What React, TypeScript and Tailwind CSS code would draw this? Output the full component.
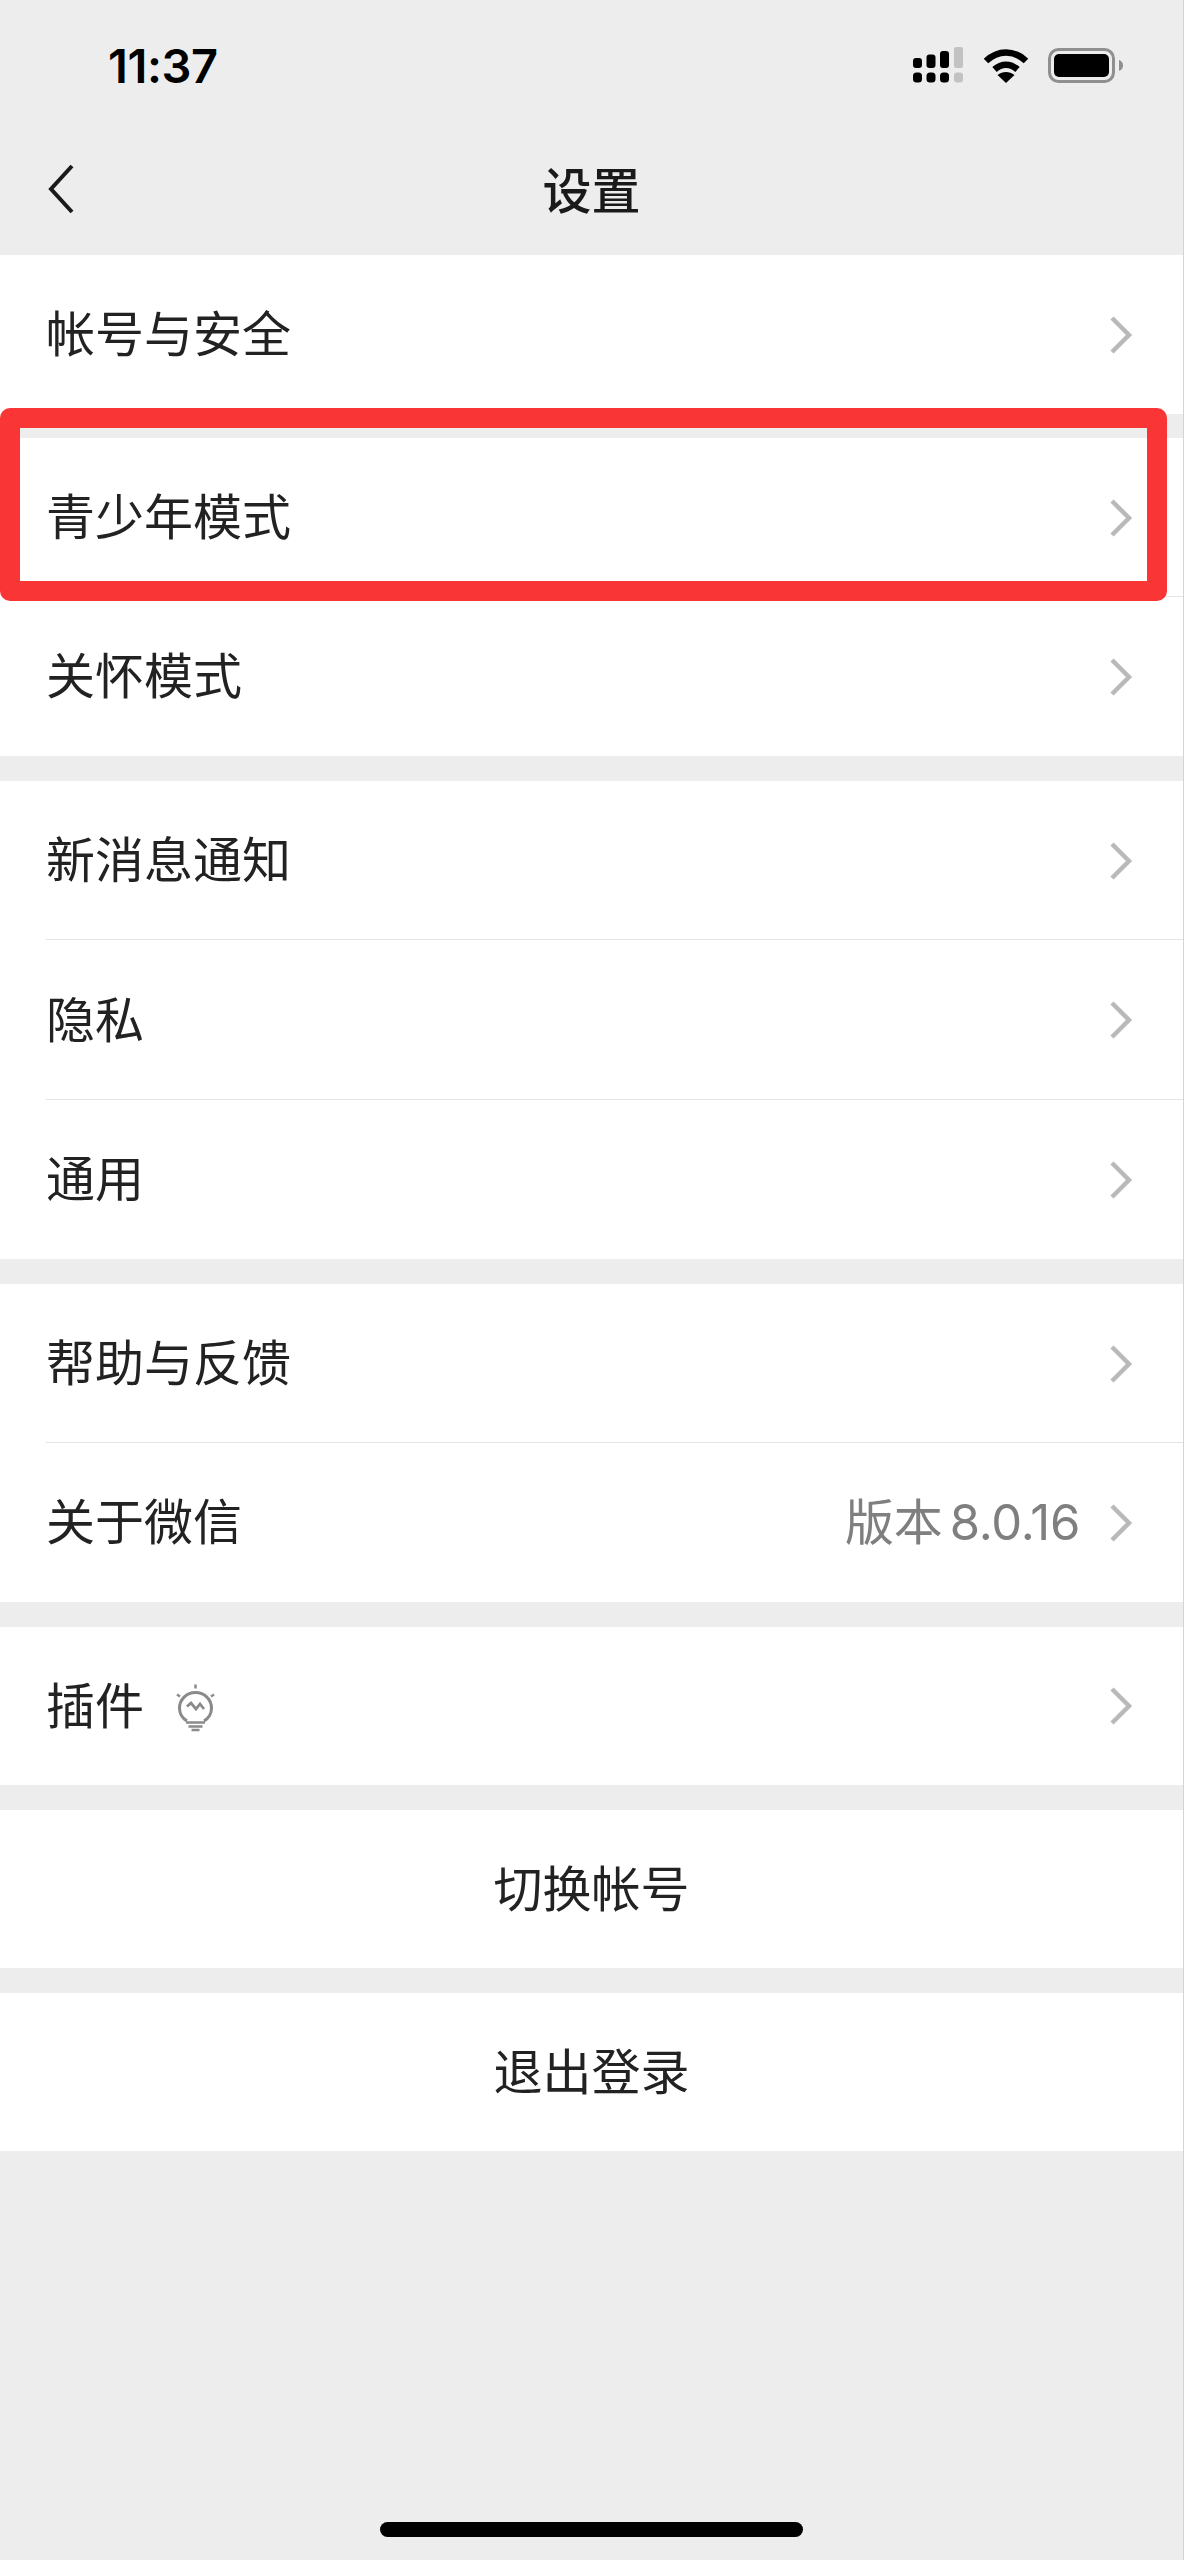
import React from 'react';

const CJK = "font-['Inter','Noto_Sans_CJK_SC',sans-serif]";

const Chevron = () => (
  <svg width="24" height="40" viewBox="0 0 24 40" fill="none" className="shrink-0">
    <path d="M3 3L20 20L3 37" stroke="#b9b9b9" strokeWidth="4.5" strokeLinecap="butt" strokeLinejoin="miter" />
  </svg>
);

const SignalIcon = () => (
  <svg width="50" height="36" viewBox="0 0 50 36">
    <rect x="0" y="11" width="9" height="10" rx="3" fill="#000" />
    <rect x="13.5" y="7.5" width="9" height="13.5" rx="3" fill="#000" />
    <rect x="27" y="4" width="9" height="17" rx="3" fill="#000" />
    <rect x="41" y="0" width="9" height="21" rx="2" fill="#c2c2c2" />
    <rect x="0" y="25.5" width="9" height="10" rx="3.5" fill="#000" />
    <rect x="13.5" y="25.5" width="9" height="10" rx="3.5" fill="#000" />
    <rect x="27" y="25.5" width="9" height="10" rx="3.5" fill="#000" />
    <rect x="41" y="25.5" width="9" height="10" rx="3" fill="#c2c2c2" />
  </svg>
);

const WifiIcon = () => (
  <svg width="46" height="35" viewBox="0 0 46 35" fill="none">
    <path d="M3 13C15 1.500 31 1.500 43 13" stroke="#000" strokeWidth="6.500" />
    <path d="M11.500 21.500C18.500 15 27.500 15 34.500 21.500" stroke="#000" strokeWidth="6.500" />
    <path d="M14.500 27C19.500 23 26.500 23 31.500 27L23 35Z" fill="#000" />
  </svg>
);

const BatteryIcon = () => (
  <svg width="75" height="35" viewBox="0 0 75 35" fill="none">
    <rect x="1.500" y="1.500" width="64" height="32" rx="9" stroke="#8f8f8f" strokeWidth="3" />
    <rect x="6" y="6" width="55" height="23" rx="5" fill="#000" />
    <path d="M71 12C74 13 75 15 75 17.500C75 20 74 22 71 23Z" fill="#8f8f8f" />
  </svg>
);

const BulbIcon = () => (
  <svg width="40" height="48" viewBox="0 0 40 48" fill="none" stroke="#8a8a8a" strokeWidth="2.500">
    <path d="M19.500 0.500V4.500" />
    <path d="M1 10.500L4 12.500" />
    <path d="M38 10.500L35 12.500" />
    <path d="M11 37C6 34 3.500 29 3.500 24C3.500 15.500 10.500 8.500 19.500 8.500C28.500 8.500 35.500 15.500 35.500 24C35.500 29 33 34 28 37" strokeWidth="3" />
    <path d="M11 22.500L15 19L20 25L24 20L28 25" strokeWidth="2.800" />
    <path d="M10 38.500H29" />
    <path d="M12.500 42.500H26.500" />
    <path d="M15.500 46H23.500" />
  </svg>
);

interface RowProps {
  label: string;
  value?: string;
  icon?: React.ReactNode;
  divider?: boolean;
  height?: string;
}

const Row = ({ label, value, icon, divider, height = 'h-[159px]' }: RowProps) => (
  <div className={`${height} flex items-center pl-[46px] pr-[50px] relative`}>
    <span className="text-[49px] leading-none text-[#222222]">{label}</span>
    {icon && <span className="ml-[32px] flex items-center pt-[4px]">{icon}</span>}
    <span className="ml-auto flex items-center gap-[29px]">
      {value && <span className="text-[49px] leading-none tracking-[-0.3px] [word-spacing:-6px] text-[#7f7f7f]">{value}</span>}
      <Chevron />
    </span>
    {divider && <div className="absolute left-[46px] right-0 bottom-0 h-px bg-[#e4e4e4]" />}
  </div>
);

const ActionRow = ({ label }: { label: string }) => (
  <div className="h-[158px] flex items-center justify-center bg-white">
    <span className="text-[49px] leading-none text-[#222222]">{label}</span>
  </div>
);

export default function App() {
  return (
    <div className={`relative h-[2560px] w-[1184px] flex flex-col bg-[#ededed] border-r border-[#d4d4d4] ${CJK}`}>
      <header className="h-[255px] shrink-0">
        <div className="flex items-center justify-between pt-[47px] pl-[108px] pr-[60px]">
          <span className="text-[47px] leading-[35px] font-semibold tracking-[-0.4px] text-black">11:37</span>
          <div className="flex items-center">
            <SignalIcon />
            <span className="ml-[20px]"><WifiIcon /></span>
            <span className="ml-[19px]"><BatteryIcon /></span>
          </div>
        </div>
        <div className="mt-[60px] h-[96px] grid grid-cols-[1fr_auto_1fr] items-center pl-[48px]">
          <svg width="26" height="50" viewBox="0 0 26 50" fill="none" className="-mt-[4px]">
            <path d="M24 2L3 25L24 48" stroke="#1a1a1a" strokeWidth="4" />
          </svg>
          <span className="text-[49px] leading-none font-medium text-[#1a1a1a] -ml-[48px]">设置</span>
          <span />
        </div>
      </header>

      <section className="bg-white">
        <Row label="帐号与安全" />
      </section>

      <section className="mt-[24px] bg-white">
        <Row label="青少年模式" divider />
        <Row label="关怀模式" />
      </section>

      <section className="mt-[25px] bg-white">
        <Row label="新消息通知" divider />
        <Row label="隐私" divider height="h-[160px]" />
        <Row label="通用" />
      </section>

      <section className="mt-[25px] bg-white">
        <Row label="帮助与反馈" divider />
        <Row label="关于微信" value="版本 8.0.16" />
      </section>

      <section className="mt-[25px] bg-white">
        <Row label="插件" icon={<BulbIcon />} height="h-[158px]" />
      </section>

      <section className="mt-[25px]">
        <ActionRow label="切换帐号" />
      </section>

      <section className="mt-[25px]">
        <ActionRow label="退出登录" />
      </section>

      <div className="flex-1 flex flex-col justify-end items-center pb-[23px]">
        <div className="h-[15px] w-[423px] rounded-full bg-black" />
      </div>

      {/* red highlight drawn over the screenshot */}
      <div className="absolute left-0 top-[408px] h-[193px] w-[1167px] border-[20px] border-[#f93535] rounded-[10px]" />
    </div>
  );
}
